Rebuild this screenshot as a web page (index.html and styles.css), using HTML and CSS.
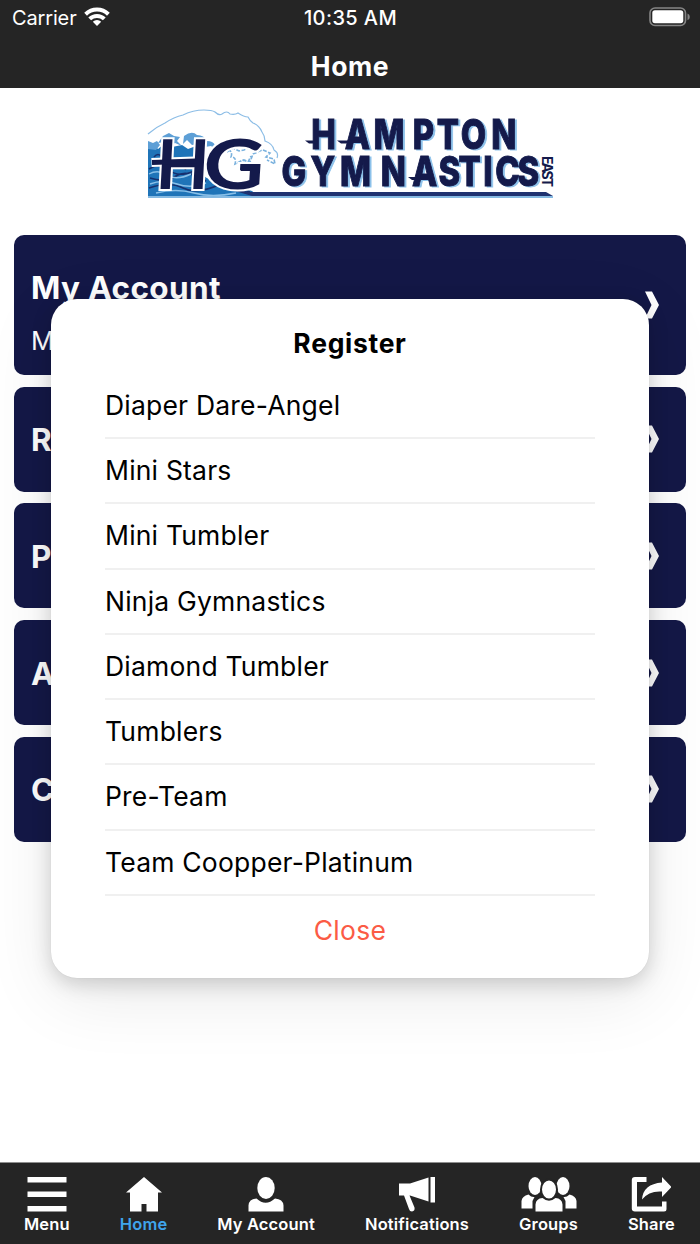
FILE: index.html
```html
<!doctype html>
<html lang="en">

<head>
  <meta charset="UTF-8">
  <title>Home</title>
  <link rel="stylesheet" href="styles.css">
</head>

<body>

  <header class="header">
    <div class="status">
      <div class="carrier">
        <span>Carrier</span>
        <svg class="wifi" width="26" height="19" viewBox="0 0 26 19">
          <g fill="none" stroke="#fff" stroke-width="4">
            <path d="M1.6 7.2a16.4 16.4 0 0 1 22.8 0"/>
            <path d="M5.7 11.9a10.4 10.4 0 0 1 14.6 0"/>
          </g>
          <path d="M8.8 14.8a6 6 0 0 1 8.4 0L13 18.9z" fill="#fff"/>
        </svg>
      </div>
      <div class="time">10:35 AM</div>
      <svg class="battery" width="42" height="20" viewBox="0 0 42 20">
        <rect x="1" y="1" width="35.5" height="17.5" rx="5" fill="none" stroke="#858585" stroke-width="1.6"/>
        <rect x="3.3" y="3.2" width="31" height="13" rx="2.6" fill="#fff"/>
        <path d="M38.5 6.5q2.3 1 2.3 3.4t-2.3 3.4z" fill="#858585"/>
      </svg>
    </div>
    <h1 class="title">Home</h1>
  </header>

  <main class="main">
    <svg class="logo" width="420" height="105" viewBox="140 100 420 105">
      <!-- wave -->
      <path d="M148 134q8-7 17-11 9-6 18-8 10-5 21-5 8 0 11 2 4 4 7 2 5-4 8 0 5 1 8-1 6 4 10 4 2 4 5 6 6 2 9 9 3 4 3 9 8 3 9 9 5 3 3 8" fill="#fff" stroke="#8cbde6" stroke-width="1.2"/>
      <path d="M148 147l6-2 4 4 6-5 8 3 10-2 6 4 8-3 4 6 1 22q10 8 24 10 14 3 27 7l6 5H148z" fill="#1f74b8"/>
      <path d="M163 136l6-3 5 3 6 1-3 4 5 5-7-3-6 3-5-4-6 1zM184 136q8-6 13-1 7 0 10 6 6 0 8 4 7-3 9 1l-7 4-6-4-6 1-4 5-3-8-6 1-5-5-4 4z" fill="#5d9fd6"/>
      <path d="M148 141l5 2 4-2 3 4-4 5-8-1z" fill="#5d9fd6"/>
      <g fill="none" stroke="#17306e" stroke-width="1.6">
        <path d="M149 169q11-7 20 1t25 1M150 178q15 5 26-2t30 5M149 188q20-7 34 0t38-4q18 4 29 8M154 157q4-5 8 0M185 170q4-8 9-4"/>
      </g>
      <g fill="none" stroke="#8ac0e8" stroke-width="1.4">
        <path d="M149 174q9-5 18 1t24-1M150 184q13-5 27 0t29-1M156 193q20-5 38 0t42 0"/>
      </g>
      <g fill="none" stroke="#7bb2de" stroke-width="1.6" stroke-dasharray="4 1.5">
        <path d="M228 149q5 3 3 8 6 0 4 7l8-4 5 2 3-6M238 164l6-4 6 2 3-8 9-4M263 150l7 3-4 4 8 2 1 5-8-4M227 152l6-4 6 3 5-1 6-3 6 2"/>
      </g>
      <path d="M225 188l9 0 14 4h298l7 4H252z" fill="#1f3270"/>
      <path d="M148 196.900h405" stroke="#5ea3d8" stroke-width="1.500"/>
      <g class="monogram">
        <path d="M151.500 162.500l43-1.500"/>
        <text transform="translate(155 189) skewX(-3)">H</text>
        <text transform="translate(202 189) scale(1.220 1) skewX(-3)">G</text>
      </g>
      <path d="M152 162.500l44-1.500" stroke="#141a4b" stroke-width="5"/>
      <g class="wordmark">
        <text transform="scale(.8 1)" x="389 431 467 516 546 576 614" y="149">HAMPTON</text>
        <text transform="scale(.8 1)" x="352 388 425 476 515 548 573 604 619 647" y="186">GYMNASTICS</text>
      </g>
      <path d="M305 140.500h12v3h-8zM337 140.500h12v3h-8zM408 177h12v3h-8z" fill="#141a4b"/>
      <text class="east" transform="translate(542 156) rotate(90)" textLength="31">EAST</text>
    </svg>

    <div class="cards">
      <div class="card card-tall">
        <div>
          <div class="card-title">My Account</div>
          <div class="card-sub">M</div>
        </div>
        <svg class="arrow" width="14" height="28" viewBox="0 0 14 28"><path d="M0 .5h7L14 14 7 27.500H0L6.500 14z"/></svg>
      </div>
      <div class="card">
        <div class="card-title">R</div>
        <svg class="arrow" width="14" height="28" viewBox="0 0 14 28"><path d="M0 .5h7L14 14 7 27.500H0L6.500 14z"/></svg>
      </div>
      <div class="card">
        <div class="card-title">P</div>
        <svg class="arrow" width="14" height="28" viewBox="0 0 14 28"><path d="M0 .5h7L14 14 7 27.500H0L6.500 14z"/></svg>
      </div>
      <div class="card">
        <div class="card-title">A</div>
        <svg class="arrow" width="14" height="28" viewBox="0 0 14 28"><path d="M0 .5h7L14 14 7 27.500H0L6.500 14z"/></svg>
      </div>
      <div class="card">
        <div class="card-title">C</div>
        <svg class="arrow" width="14" height="28" viewBox="0 0 14 28"><path d="M0 .5h7L14 14 7 27.500H0L6.500 14z"/></svg>
      </div>
    </div>
  </main>

  <div class="modal">
    <h2 class="modal-title">Register</h2>
    <ul class="list">
      <li>Diaper Dare-Angel</li>
      <li>Mini Stars</li>
      <li>Mini Tumbler</li>
      <li>Ninja Gymnastics</li>
      <li>Diamond Tumbler</li>
      <li>Tumblers</li>
      <li>Pre-Team</li>
      <li>Team Coopper-Platinum</li>
    </ul>
    <div class="close">Close</div>
  </div>

  <nav class="tabs">
    <div class="tab">
      <svg width="40" height="35" viewBox="0 0 40 35"><path d="M.5 0h39v5.500H.5zM.5 14.500h39V20H.5zM.5 29h39v5.500H.5z"/></svg>
      <span>Menu</span>
    </div>
    <div class="tab active">
      <svg width="36" height="35" viewBox="0 0 36 35"><path d="M18 0l18 15.500h-4V34.500H20.500V27h-5v7.500H4v-19H0z"/></svg>
      <span>Home</span>
    </div>
    <div class="tab">
      <svg width="36" height="35" viewBox="0 0 36 35"><ellipse cx="18" cy="11" rx="8.700" ry="11"/><path d="M.5 34.500v-6Q1 22 8.500 21.500q9 8.500 18.500 0 8 .5 8.500 7v6z"/></svg>
      <span>My Account</span>
    </div>
    <div class="tab">
      <svg width="36" height="35" viewBox="0 0 36 35"><path d="M0 6.500h11L29.500.5v24L11 18.500h-.5l5 12q.7 3.500-2.500 4-2.400 0-3-2.500L5 18.500H0zM31.500 0H36v25.500h-4.500z"/></svg>
      <span>Notifications</span>
    </div>
    <div class="tab">
      <svg width="56" height="35" viewBox="0 0 56 35">
        <ellipse cx="14" cy="9" rx="6.500" ry="9"/>
        <ellipse cx="42" cy="9" rx="6.500" ry="9"/>
        <path d="M.5 31.500V24q.5-5 7-6.500 3 3 6 2.500l-2 4v7.500zM55.500 31.500V24q-.5-5-7-6.500-3 3-6 2.500l2 4v7.500z"/>
        <ellipse class="cut" cx="28" cy="12.500" rx="8" ry="10"/>
        <path d="M14.500 34.500v-7q.5-6 7-6.500 6.500 5.500 13 0 6.500.5 7 6.500v7z"/>
      </svg>
      <span>Groups</span>
    </div>
    <div class="tab">
      <svg width="40" height="35" viewBox="0 0 40 35"><path d="M15.500 0v5H6v24.500h25V24.500h4.500V32q0 2.500-2.500 2.500H4Q.8 34.500.8 31.500V3Q.8 0 4 0zM11 22.500Q12 7 31 5.500V0l9.500 10L31 20v-5.500q-13-1-20 8z"/></svg>
      <span>Share</span>
    </div>
  </nav>

</body>

</html>
```
FILE: styles.css
```css
* {
  margin: 0;
  padding: 0;
  box-sizing: border-box;
}

body {
  width: 700px;
  height: 1244px;
  display: flex;
  flex-direction: column;
  background: #fff;
  font-family: Inter, "Liberation Sans", sans-serif;
  color: #000;
  position: relative;
  overflow: hidden;
}

/* header */
.header {
  height: 88px;
  background: #252525;
  color: #fff;
  text-align: center;
}

.status {
  height: 36px;
  padding: 0 9px 0 12px;
  display: grid;
  grid-template-columns: 1fr auto 1fr;
  align-items: center;
  font-size: 20px;
}

.carrier {
  display: flex;
  align-items: center;
  gap: 7px;
  letter-spacing: -.15px;
}

.wifi {
  margin-top: -3px;
}

.time {
  margin-right: 2px;
  font-weight: 500;
  letter-spacing: .4px;
}

.battery {
  justify-self: end;
  margin-top: -2px;
}

.title {
  font-size: 26.5px;
  line-height: 60px;
  font-weight: 700;
  letter-spacing: .6px;
}

/* content */
.main {
  flex: 1;
  padding: 12px 14px 0;
}

.logo {
  display: block;
  margin: 0 0 30px 126px;
}

.monogram {
  font: 700 69px Lato, sans-serif;
  fill: #141a4b;
  stroke: #fff;
  stroke-width: 4px;
  paint-order: stroke;
}

.monogram path {
  stroke-width: 9px;
}

.wordmark {
  font-size: 41px;
  font-weight: 800;
  fill: #141a4b;
  stroke: #141a4b;
  stroke-width: 1px;
  filter: drop-shadow(2px 1.5px 0 #8cc1ea);
}

.east {
  font-size: 14px;
  font-weight: 700;
  fill: #141a4b;
}

.cards {
  display: flex;
  flex-direction: column;
  gap: 11.7px;
}

.card {
  height: 105px;
  padding: 0 27px 0 17px;
  display: flex;
  align-items: center;
  justify-content: space-between;
  background: #141847;
  border-radius: 10px;
  color: #fff;
}

.card-tall {
  height: 140px;
}

.card-title {
  padding-top: 2px;
  font-size: 31.5px;
  line-height: 40px;
  font-weight: 700;
  letter-spacing: .4px;
}

.card-tall .card-title {
  padding-top: 15px;
}

.card-sub {
  margin-top: 17px;
  font-size: 26px;
  line-height: 32px;
}

.arrow {
  fill: #fff;
}

/* modal */
.modal {
  position: absolute;
  left: 51px;
  top: 299px;
  width: 598px;
  height: 679px;
  padding: 25px 54px 0;
  background: #fff;
  border-radius: 26px;
  box-shadow: 0 0 1px rgba(0, 0, 0, .15), 0 6px 20px rgba(0, 0, 0, .17), 0 18px 70px rgba(0, 0, 0, .09);
}

.modal-title {
  font-size: 26.5px;
  line-height: 39px;
  font-weight: 700;
  letter-spacing: .7px;
  text-align: center;
}

.list {
  margin-top: 10.7px;
  list-style: none;
}

.list li {
  height: 65.3px;
  line-height: 62.6px;
  border-bottom: 2px solid #f0f0f0;
  font-size: 26.5px;
  letter-spacing: .2px;
}

.close {
  font-size: 26.5px;
  line-height: 68px;
  letter-spacing: .3px;
  text-align: center;
  color: #fb5b45;
}

/* bottom tabs */
.tabs {
  height: 82px;
  padding: 14px 25px 0 24px;
  display: flex;
  justify-content: space-between;
  background: #252525;
  border-top: 1px solid #8e8e8e;
  color: #fff;
}

.tab {
  display: flex;
  flex-direction: column;
  align-items: center;
  font-size: 16.5px;
  line-height: 24px;
  font-weight: 600;
  letter-spacing: .15px;
}

.tab svg {
  fill: #fff;
}

.tab .cut {
  stroke: #252525;
  stroke-width: 2px;
}

.active {
  color: #3fa4ec;
}
```
